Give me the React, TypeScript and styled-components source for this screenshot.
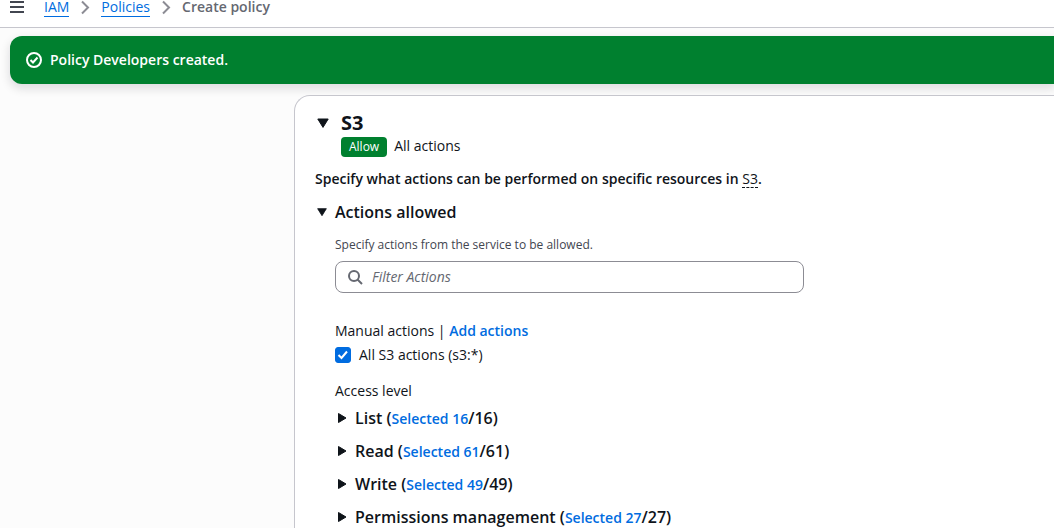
import React, { useState } from 'react';
import styled, { createGlobalStyle } from 'styled-components';

const GlobalStyle = createGlobalStyle`
  * { box-sizing: border-box; }
  html { overflow: hidden; height: 100%; }
  body {
    margin: 0;
    background: #fcfcfc;
    color: #0f141a;
    font-family: "Open Sans", "Noto Sans", sans-serif;
    font-size: 14px;
    line-height: 20px;
  }
  button, input { font: inherit; color: inherit; }
`;

const Header = styled.header`
  display: flex;
  align-items: flex-start;
  gap: 20px;
  padding: 0 8px 10px;
  background: #fff;
  border-bottom: 1px solid #c6c6cd;
`;

const PlainButton = styled.button`
  display: flex;
  padding: 0;
  border: 0;
  background: none;
  cursor: pointer;
`;

const Crumbs = styled.ol`
  display: flex;
  align-items: flex-start;
  gap: 8px;
  margin: 0;
  padding: 0;
  list-style: none;
  line-height: 14px;
`;

const Crumb = styled.li`
  display: flex;
  align-items: flex-start;
  gap: 8px;
`;

const CrumbLink = styled.a`
  padding-bottom: 2px;
  color: #006ce0;
  text-decoration: none;
  border-bottom: 1px solid #006ce0;
`;

const CurrentCrumb = styled.span`
  color: #656871;
  font-weight: 600;
`;

const Main = styled.main`
  padding: 8px 0 0 10px;
`;

const Flash = styled.div`
  display: flex;
  align-items: center;
  gap: 8px;
  padding: 14px 16px;
  border-radius: 12px 0 0 12px;
  background: #00802f;
  color: #fff;
  font-weight: 600;
  box-shadow: 0 4px 10px 1px rgba(0, 7, 22, 0.12);
`;

const Panel = styled.section`
  margin: 11px 0 0 284px;
  padding: 15px 20px 0;
  border: 1px solid #c6c6cd;
  border-width: 1px 0 0 1px;
  border-radius: 16px 0 0 0;
  background: #fff;
`;

const ServiceHeader = styled.div`
  display: flex;
  align-items: flex-start;
  gap: 10px;
`;

const CaretBox = styled.span<{ $height: number; $width: number }>`
  display: flex;
  flex: none;
  align-items: center;
  justify-content: center;
  width: ${(p) => p.$width}px;
  height: ${(p) => p.$height}px;
`;

const ServiceName = styled.h2`
  margin: 0;
  font-size: 20px;
  line-height: 24px;
`;

const Effect = styled.div`
  display: flex;
  align-items: flex-start;
  gap: 7px;
  margin-top: 1px;
`;

const Badge = styled.span`
  margin-top: 1px;
  padding: 0 8px;
  border-radius: 4px;
  background: #00802f;
  color: #fff;
  font-size: 12px;
`;

const Lead = styled.p`
  margin: 12px 0 11px;
  font-weight: 600;
`;

const Term = styled.button`
  padding: 0;
  border: 0;
  border-bottom: 1px dashed #0f141a;
  background: none;
  font-weight: 400;
  line-height: 16px;
  cursor: pointer;
`;

const SectionToggle = styled(PlainButton)`
  align-items: center;
  gap: 6px;
  font-size: 16px;
  font-weight: 600;
  line-height: 24px;
`;

const SectionBody = styled.div`
  padding-left: 20px;
`;

const Hint = styled.label`
  display: block;
  margin: 13px 0 8px;
  color: #424650;
  font-size: 12px;
  line-height: 16px;
`;

const SearchField = styled.div`
  display: flex;
  align-items: center;
  gap: 9px;
  max-width: 469px;
  height: 32px;
  margin-bottom: 28px;
  padding: 0 11px;
  border: 1px solid #8c8c94;
  border-radius: 8px;
  background: #fff;
`;

const SearchInput = styled.input`
  flex: 1;
  min-width: 0;
  padding: 0;
  border: 0;
  outline: 0;
  background: none;
  &::placeholder {
    color: #656871;
    font-style: italic;
    opacity: 1;
  }
`;

const ActionLink = styled.a`
  color: #006ce0;
  font-size: 14px;
  font-weight: 600;
  line-height: 16px;
  text-decoration: none;
`;

const CheckRow = styled.label`
  display: flex;
  align-items: center;
  gap: 8px;
  margin: 4px 0 16px;
`;

const Checkbox = styled.input`
  appearance: none;
  width: 16px;
  height: 16px;
  margin: 0;
  border: 1px solid #8c8c94;
  border-radius: 3px;
  &:checked {
    border-color: #006ce0;
    background: #006ce0 url("data:image/svg+xml,%3Csvg xmlns='http://www.w3.org/2000/svg' viewBox='0 0 14 14'%3E%3Cpath d='M2.5 7l3 3 5.5-6.5' fill='none' stroke='white' stroke-width='2'/%3E%3C/svg%3E") center / 14px no-repeat;
  }
`;

const Levels = styled.ul`
  display: flex;
  flex-direction: column;
  gap: 9px;
  margin: 5px 0 0;
  padding: 0;
  list-style: none;
`;

const Level = styled.li`
  display: flex;
  align-items: center;
  gap: 6px;
  font-size: 16px;
  font-weight: 600;
  line-height: 24px;
  white-space: nowrap;
`;

const CaretDown = ({ size }: { size: number }) => (
  <svg width={size} height={size} viewBox="0 0 12 12" aria-hidden="true">
    <path d="M.8 2h10.400L6 10.400z" fill="#0f141a" stroke="#0f141a" strokeWidth="1" strokeLinejoin="round" />
  </svg>
);

const CaretRight = () => (
  <svg width="10" height="10" viewBox="0 0 10 10" aria-hidden="true">
    <path d="M1.500 .5v9L9 5z" fill="#0f141a" stroke="#0f141a" strokeWidth="1" strokeLinejoin="round" />
  </svg>
);

const Chevron = () => (
  <svg width="16" height="16" viewBox="0 0 16 16" aria-hidden="true">
    <path d="M5 1.500l6 6-6 6" fill="none" stroke="#8c8c94" strokeWidth="2" />
  </svg>
);

const levels = [
  { name: 'List', count: 16 },
  { name: 'Read', count: 61 },
  { name: 'Write', count: 49 },
  { name: 'Permissions management', count: 27 },
];

export default function App() {
  const [all, setAll] = useState(true);
  return (
    <>
      <GlobalStyle />
      <Header>
        <PlainButton aria-label="Open navigation">
          <svg width="16" height="16" viewBox="0 0 16 16" aria-hidden="true">
            <path d="M2 2h14M2 7h14M2 12h14" stroke="#424650" strokeWidth="2" />
          </svg>
        </PlainButton>
        <nav aria-label="Breadcrumbs">
          <Crumbs>
            <Crumb><CrumbLink href="#iam">IAM</CrumbLink><Chevron /></Crumb>
            <Crumb><CrumbLink href="#policies">Policies</CrumbLink><Chevron /></Crumb>
            <Crumb><CurrentCrumb>Create policy</CurrentCrumb></Crumb>
          </Crumbs>
        </nav>
      </Header>
      <Main>
        <Flash role="status">
          <svg width="16" height="16" viewBox="0 0 16 16" fill="none" stroke="#fff" strokeWidth="2" aria-hidden="true">
            <circle cx="8" cy="8" r="7" />
            <path d="M4.500 8l2.500 2.500L11.500 5.500" />
          </svg>
          Policy Developers created.
        </Flash>
        <Panel>
          <ServiceHeader>
            <PlainButton aria-label="Collapse S3">
              <CaretBox $width={16} $height={24}><CaretDown size={12} /></CaretBox>
            </PlainButton>
            <div>
              <ServiceName>S3</ServiceName>
              <Effect><Badge>Allow</Badge>All actions</Effect>
            </div>
          </ServiceHeader>
          <Lead>
            Specify what actions can be performed on specific resources in <Term>S3</Term>.
          </Lead>
          <SectionToggle aria-expanded="true">
            <CaretBox $width={14} $height={24}><CaretDown size={10} /></CaretBox>
            Actions allowed
          </SectionToggle>
          <SectionBody>
            <Hint htmlFor="filter">Specify actions from the service to be allowed.</Hint>
            <SearchField>
              <svg width="16" height="16" viewBox="0 0 16 16" fill="none" stroke="#656871" strokeWidth="2" aria-hidden="true">
                <circle cx="7" cy="7" r="5" />
                <path d="M15 15l-4.500-4.500" />
              </svg>
              <SearchInput id="filter" type="text" placeholder="Filter Actions" />
            </SearchField>
            <div>Manual actions | <ActionLink href="#add">Add actions</ActionLink></div>
            <CheckRow>
              <Checkbox type="checkbox" checked={all} onChange={(e) => setAll(e.target.checked)} />
              All S3 actions (s3:*)
            </CheckRow>
            <div>Access level</div>
            <Levels>
              {levels.map((l) => (
                <Level key={l.name}>
                  <PlainButton aria-label={`Expand ${l.name}`}>
                    <CaretBox $width={14} $height={24}><CaretRight /></CaretBox>
                  </PlainButton>
                  <span>
                    {l.name} (<ActionLink href="#selected">Selected {l.count}</ActionLink>/{l.count})
                  </span>
                </Level>
              ))}
            </Levels>
          </SectionBody>
        </Panel>
      </Main>
    </>
  );
}
